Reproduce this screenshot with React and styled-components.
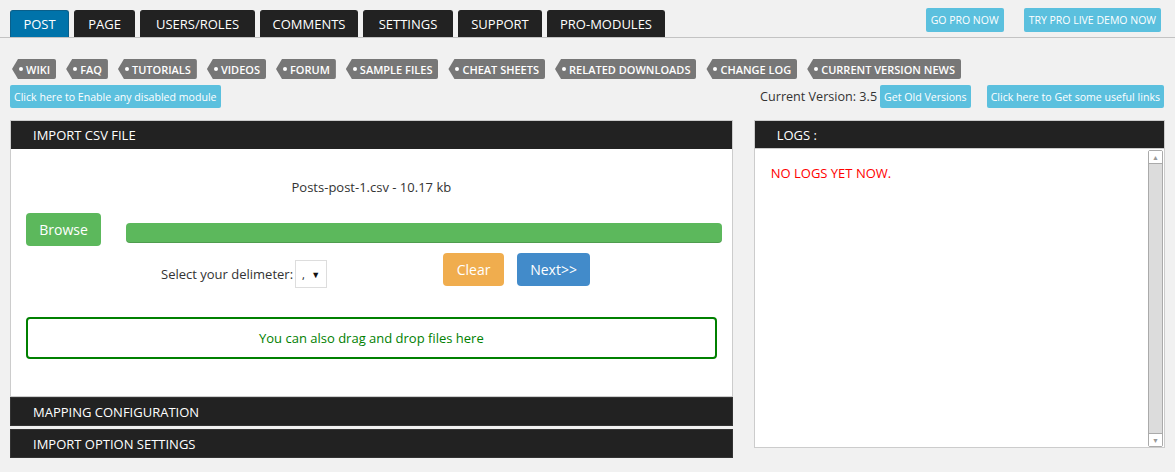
import React from 'react'
import styled, { createGlobalStyle } from 'styled-components'

const tabs = [
  { label: 'POST', w: 59 },
  { label: 'PAGE', w: 61 },
  { label: 'USERS/ROLES', w: 115 },
  { label: 'COMMENTS', w: 98 },
  { label: 'SETTINGS', w: 90 },
  { label: 'SUPPORT', w: 84 },
  { label: 'PRO-MODULES', w: 118 },
]
const tags = ['WIKI', 'FAQ', 'TUTORIALS', 'VIDEOS', 'FORUM', 'SAMPLE FILES', 'CHEAT SHEETS', 'RELATED DOWNLOADS', 'CHANGE LOG', 'CURRENT VERSION NEWS']

export default function App() {
  return (
    <>
      <GlobalStyle />
      <Page>
        <TopBar>
          <Tabs>
            {tabs.map((t, i) => (
              <Tab key={t.label} $w={t.w} $active={i === 0}>{t.label}</Tab>
            ))}
          </Tabs>
          <ProLinks>
            <InfoButton $size="10.5px" $height="24px" $upper>Go Pro Now</InfoButton>
            <InfoButton $size="10.5px" $height="24px" $upper>Try Pro Live Demo Now</InfoButton>
          </ProLinks>
        </TopBar>

        <TagRow>
          {tags.map(t => (
            <Tag key={t}>{t}</Tag>
          ))}
        </TagRow>

        <LinkRow>
          <InfoButton>Click here to Enable any disabled module</InfoButton>
          <VersionBox>
            <Version>Current Version: 3.5</Version>
            <InfoButton>Get Old Versions</InfoButton>
            <InfoButton $ml="16px">Click here to Get some useful links</InfoButton>
          </VersionBox>
        </LinkRow>

        <Columns>
          <MainCol>
            <Panel>
              <PanelHead>IMPORT CSV FILE</PanelHead>
              <PanelBody>
                <FileName>Posts-post-1.csv - 10.17 kb</FileName>
                <UploadRow>
                  <Btn $bg="#5cb85c" $w="75px">Browse</Btn>
                  <Progress />
                </UploadRow>
                <ControlRow>
                  <Delimiter>
                    Select your delimeter:
                    <Select>
                      <span>,</span>
                      <span>▼</span>
                    </Select>
                  </Delimiter>
                  <Btn $bg="#f0ad4e" $w="61px">Clear</Btn>
                  <Btn $bg="#428bca" $w="73px">Next&gt;&gt;</Btn>
                </ControlRow>
                <DropZone>You can also drag and drop files here</DropZone>
              </PanelBody>
            </Panel>
            <PanelHead $bar>MAPPING CONFIGURATION</PanelHead>
            <PanelHead $bar $mt="3px">IMPORT OPTION SETTINGS</PanelHead>
          </MainCol>

          <LogPanel>
            <PanelHead $small>LOGS :</PanelHead>
            <LogBody>
              <LogText>NO LOGS YET NOW.</LogText>
              <ScrollBar>
                <ScrollBtn>▲</ScrollBtn>
                <ScrollTrack />
                <ScrollBtn>▼</ScrollBtn>
              </ScrollBar>
            </LogBody>
          </LogPanel>
        </Columns>
      </Page>
    </>
  )
}

const GlobalStyle = createGlobalStyle`
  body {
    margin: 0;
    background: #f1f1f1;
    font-family: "Open Sans", "Noto Sans", sans-serif;
    color: #333;
  }
`

const Page = styled.div`
  width: 1175px;
  height: 472px;
  overflow: hidden;
`

const TopBar = styled.div`
  display: flex;
  justify-content: space-between;
  padding: 8px 14px 0 10px;
  border-bottom: 1px solid #c3c3c3;
  height: 29px;
`

const Tabs = styled.div`
  display: flex;
  gap: 5px;
  align-self: flex-end;
  margin-top: 2px;
`

const Tab = styled.div`
  width: ${p => p.$w}px;
  height: 27px;
  display: flex;
  align-items: center;
  justify-content: center;
  font-size: 13px;
  color: #fff;
  background: ${p => (p.$active ? '#0073aa' : '#222')};
  border: 1px solid ${p => (p.$active ? '#0a5f8a' : '#222')};
  border-bottom: none;
  border-radius: 3px 3px 0 0;
  box-sizing: border-box;
`

const ProLinks = styled.div`
  display: flex;
  gap: 20px;
  align-items: flex-start;
`

const InfoButton = styled.div`
  display: inline-flex;
  align-items: center;
  height: ${p => p.$height || '23px'};
  padding: 0 ${p => (p.$upper ? '5px' : '4px')};
  margin-left: ${p => p.$ml || '0'};
  background: #5bc0de;
  color: #fff;
  font-size: ${p => p.$size || '10.6px'};
  text-transform: ${p => (p.$upper ? 'uppercase' : 'none')};
  border-radius: 2px;
  white-space: nowrap;
`

const TagRow = styled.div`
  display: flex;
  gap: 10px;
  padding: 21px 0 0 12px;
`

const Tag = styled.div`
  position: relative;
  height: 20px;
  display: flex;
  align-items: center;
  padding: 0 6px 0 14px;
  background: #777;
  color: #fff;
  font-size: 11px;
  font-weight: 600;
  clip-path: polygon(6px 0, 100% 0, 100% 100%, 6px 100%, 0 50%);
  border-radius: 0 2px 2px 0;

  &::before {
    content: '';
    position: absolute;
    left: 7px;
    top: 8px;
    width: 4px;
    height: 4px;
    border-radius: 50%;
    background: #fff;
  }
`

const LinkRow = styled.div`
  display: flex;
  justify-content: space-between;
  padding: 6px 11px 0 10px;
`

const VersionBox = styled.div`
  display: flex;
  align-items: center;
`

const Version = styled.span`
  font-size: 12.6px;
  color: #333;
  margin-right: 3px;
`

const Columns = styled.div`
  display: flex;
  gap: 21px;
  padding: 12px 10px 0 10px;
  align-items: flex-start;
`

const MainCol = styled.div`
  width: 724px;
`

const Panel = styled.div`
  border: 1px solid #ccc;
  background: #fff;
`

const PanelHead = styled.div`
  height: ${p => (p.$small ? '27px' : p.$bar ? '27px' : '28px')};
  margin-top: ${p => p.$mt || '0'};
  display: flex;
  align-items: center;
  padding-left: 22px;
  background: #222;
  color: #fff;
  font-size: 13px;
  border: ${p => (p.$bar ? '1px solid #333' : 'none')};
`

const PanelBody = styled.div`
  display: flex;
  flex-direction: column;
  padding: 29px 0 37px;
`

const FileName = styled.div`
  text-align: center;
  font-size: 13px;
  line-height: 18px;
  color: #333;
`

const UploadRow = styled.div`
  display: flex;
  align-items: flex-start;
  gap: 25px;
  margin: 17px 10px 0 15px;
`

const Btn = styled.div`
  width: ${p => p.$w};
  height: 33px;
  display: flex;
  align-items: center;
  justify-content: center;
  background: ${p => p.$bg};
  color: #fff;
  font-size: 14px;
  border-radius: 4px;
  box-sizing: border-box;
`

const Progress = styled.div`
  flex: 1;
  height: 20px;
  margin-top: 10px;
  background: #5cb85c;
  border-radius: 4px;
  box-shadow: inset 0 -1px 0 rgba(0, 0, 0, 0.15);
`

const ControlRow = styled.div`
  display: flex;
  align-items: flex-start;
  gap: 13px;
  margin: 7px 0 0 150px;
`

const Delimiter = styled.div`
  display: flex;
  align-items: center;
  gap: 2px;
  margin: 7px 103px 0 0;
  font-size: 13px;
  color: #333;
  white-space: nowrap;
`

const Select = styled.div`
  flex-shrink: 0;
  width: 32px;
  height: 28px;
  box-sizing: border-box;
  border: 1px solid #ddd;
  display: flex;
  align-items: center;
  justify-content: space-between;
  padding: 0 6px;
  font-size: 11px;
  color: #111;
  background: #fff;

  span:last-child {
    font-size: 9px;
  }
`

const DropZone = styled.div`
  margin: 29px 15px 0 15px;
  height: 42px;
  box-sizing: border-box;
  border: 2px solid #008000;
  border-radius: 4px;
  display: flex;
  align-items: center;
  justify-content: center;
  color: #008000;
  font-size: 13px;
`

const LogPanel = styled.div`
  width: 410px;
  border: 1px solid #ccc;
  background: #fff;
`

const LogBody = styled.div`
  display: flex;
  height: 298px;
  border-top: 1px solid #ccc;
`

const LogText = styled.div`
  flex: 1;
  padding: 15px 16px;
  color: #ff0000;
  font-size: 13px;
`

const ScrollBar = styled.div`
  width: 13px;
  margin: 1px 1px 0 0;
  display: flex;
  flex-direction: column;
  border: 1px solid #aaa;
  border-radius: 2px;
  background: #dcdcdc;
`

const ScrollBtn = styled.div`
  height: 12px;
  background: #fff;
  color: #999;
  font-size: 7px;
  display: flex;
  align-items: center;
  justify-content: center;
  border-bottom: 1px solid #aaa;

  &:last-child {
    border-bottom: none;
    border-top: 1px solid #aaa;
  }
`

const ScrollTrack = styled.div`
  flex: 1;
`
